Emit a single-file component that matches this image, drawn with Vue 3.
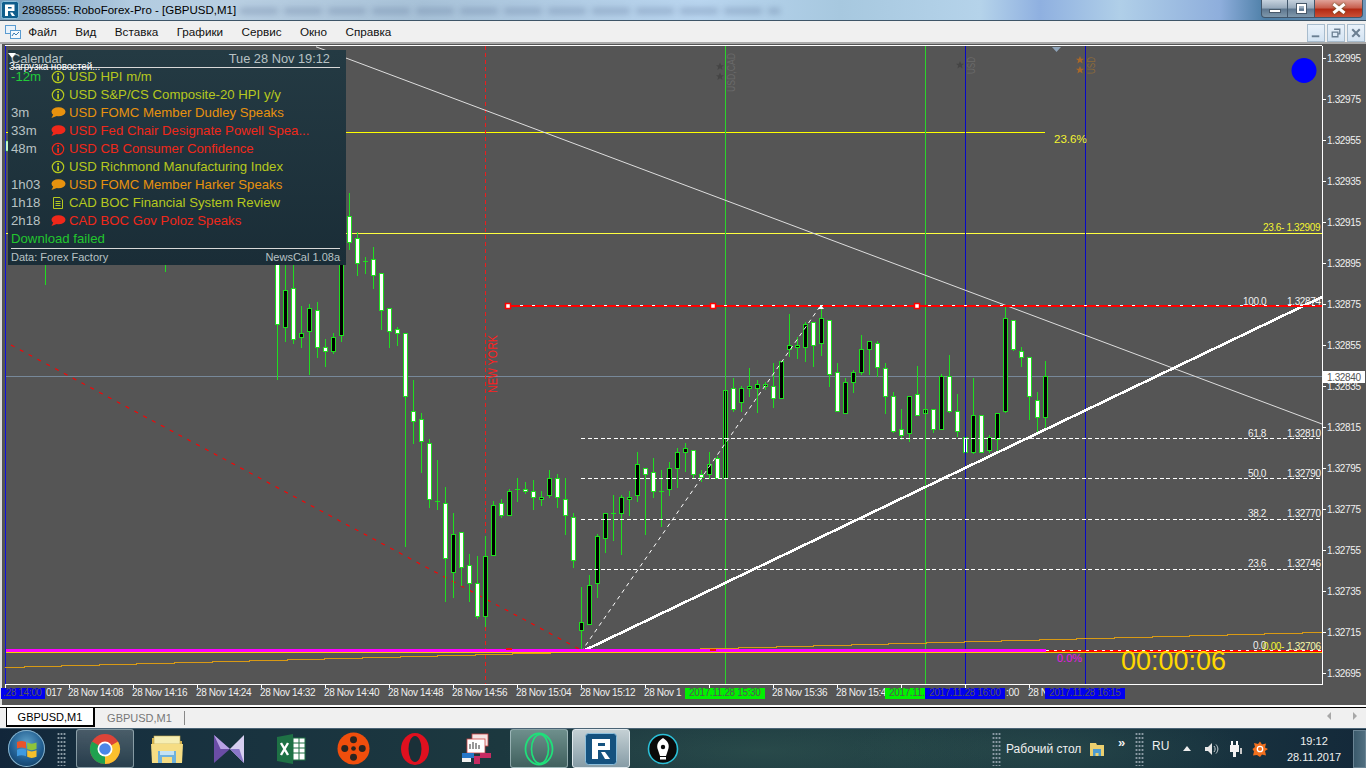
<script setup>
const raw = [
  ['w',250,324,230,380],['b',290,327,265,342],['w',288,339,265,344],['b',333,337,306,348],['b',308,331,304,375],
  ['w',310,347,302,358],['w',347,351,339,367],['b',337,351,333,354],['b',230,335,225,342],['w',216,242,193,250],
  ['w',238,263,232,276],['d',261,261,257,274],['w',259,275,247,289],['w',273,310,273,330],['w',308,331,308,348],
  ['w',329,333,327,346],['w',333,396,333,547],['w',411,421,380,444],['w',419,441,413,473],['w',443,499,439,508],
  ['d',501,501,460,510],['w',503,558,487,602],['b',534,572,513,598],['w',532,567,532,586],['w',565,583,554,602],
  ['w',583,616,556,619],['b',556,616,536,627],['b',505,555,501,555],['w',503,515,499,518],['b',491,515,489,515],
  ['d',489,489,478,502],['w',489,491,482,494],['w',491,497,480,510],['b',497,499,491,506],['b',478,495,470,498],
  ['w',478,497,474,508],['w',499,515,478,535],['w',517,560,513,568],['b',622,630,587,653],['b',585,624,575,624],
  ['b',536,583,534,598],['b',513,538,513,553],['d',513,513,495,541],['b',497,513,495,555],['b',497,499,491,516],
  ['b',464,495,452,502],['w',468,474,468,535],['w',472,491,458,498],['d',491,491,470,527],['b',468,489,462,496],
  ['b',452,468,448,488],['b',448,452,443,472],['w',450,474,450,479],['w',474,477,470,482],['b',464,474,452,479],
  ['w',458,478,456,479],['b',390,478,390,478],['w',388,409,378,412],['b',388,402,386,412],['b',386,388,368,397],
  ['b',384,388,380,413],['b',384,386,382,390],['w',386,398,363,408],['b',361,398,361,398],['b',345,349,314,357],
  ['b',345,347,337,359],['b',324,347,322,362],['w',322,345,322,367],['b',318,343,305,356],['w',320,374,320,387],
  ['w',372,411,363,411],['b',382,413,378,413],['b',372,382,370,393],['b',349,372,335,375],['b',341,349,341,375],
  ['w',343,367,341,377],['w',368,396,363,414],['w',396,431,392,433],['w',429,435,409,440],['b',396,433,396,442],
  ['w',394,415,366,415],['b',409,413,409,413],['w',409,429,409,433],['b',376,429,374,429],['w',376,411,355,413],
  ['w',411,431,394,437],['w',437,452,437,452],['b',415,452,378,454],['w',415,452,415,452],['b',437,450,435,453],
  ['b',413,439,413,451],['b',318,411,306,413],['w',320,349,320,351],['w',351,357,347,367],['w',357,396,357,420],
  ['w',400,417,392,433],['b',376,417,361,429]
]
const candles = raw.map((c, i) => ({
  x: 277 + i * 8, kind: c[0], top: c[1], bot: c[2], wt: c[3], wb: c[4]
}))

const orange = (() => {
  const pts = []
  let x = 5, y = 667
  pts.push(`${x},${y}`)
  x = 24
  while (x < 1322) {
    pts.push(`${x},${y}`)
    y -= 1
    pts.push(`${x},${y}`)
    x += 37.6
  }
  pts.push(`1322,${y}`)
  return pts.join(' ')
})()

const prices = ['1.32995','1.32975','1.32955','1.32935','1.32915','1.32895','1.32875','1.32855','1.32835','1.32815','1.32795','1.32775','1.32755','1.32735','1.32715','1.32695']
  .map((t, i) => ({ t, y: 58 + i * 41 }))

const ticks = [69,133,197,261,325,389,453,517,581,645,709,773,837,901,965,1029]

const timeLabels = [
  [46,'017'],[68,'28 Nov 14:08'],[132,'28 Nov 14:16'],[196,'28 Nov 14:24'],[260,'28 Nov 14:32'],[324,'28 Nov 14:40'],
  [388,'28 Nov 14:48'],[452,'28 Nov 14:56'],[516,'28 Nov 15:04'],[580,'28 Nov 15:12'],[644,'28 Nov 1'],
  [772,'28 Nov 15:36'],[836,'28 Nov 15:4'],[1006,':00'],[1028,'28 N']
]

const timeBoxes = [
  { x: 1, w: 44, fill: '#0000f0', tx: 3, t: '.28 14:00' },
  { x: 685, w: 80, fill: '#00f000', tx: 689, t: '2017.11.28 15:30' },
  { x: 885, w: 40, fill: '#00f000', tx: 889, t: '2017.11.' },
  { x: 925, w: 80, fill: '#0000f0', tx: 929, t: '2017.11.28 16:00' },
  { x: 1045, w: 80, fill: '#0000f0', tx: 1049, t: '2017.11.28 16:15' }
]

const fibs = [
  { y: 306, ty: 305, lv: '100.0', lx: 1243, p: '1.32874' },
  { y: 438, ty: 437, lv: '61.8', lx: 1248, p: '1.32810', dash: 1, x: 581 },
  { y: 478, ty: 477, lv: '50.0', lx: 1248, p: '1.32790', dash: 1, x: 581 },
  { y: 519, ty: 517, lv: '38.2', lx: 1248, p: '1.32770', dash: 1, x: 581 },
  { y: 569, ty: 567, lv: '23.6', lx: 1248, p: '1.32746', dash: 1, x: 581 }
]

const stars = [
  { x: 720, y: 66.5, c: '#454545' }, { x: 720, y: 76.5, c: '#454545' }, { x: 960, y: 65, c: '#454545' },
  { x: 1080, y: 60, c: '#a8682a' }, { x: 1080, y: 70, c: '#a8682a' }
]

const news = [
  { time: '-12m', icon: 'info', tone: 'yellow', text: 'USD HPI m/m', live: true },
  { time: '', icon: 'info', tone: 'yellow', text: 'USD S&P/CS Composite-20 HPI y/y' },
  { time: '3m', icon: 'talk', tone: 'orange', text: 'USD FOMC Member Dudley Speaks' },
  { time: '33m', icon: 'talk', tone: 'red', text: 'USD Fed Chair Designate Powell Spea...' },
  { time: '48m', icon: 'info', tone: 'red', text: 'USD CB Consumer Confidence' },
  { time: '', icon: 'info', tone: 'yellow', text: 'USD Richmond Manufacturing Index' },
  { time: '1h03', icon: 'talk', tone: 'orange', text: 'USD FOMC Member Harker Speaks' },
  { time: '1h18', icon: 'doc', tone: 'yellow', text: 'CAD BOC Financial System Review' },
  { time: '2h18', icon: 'talk', tone: 'red', text: 'CAD BOC Gov Poloz Speaks' }
]

const menus = ['Файл', 'Вид', 'Вставка', 'Графики', 'Сервис', 'Окно', 'Справка']
</script>

<template>
  <div class="screen">
    <header class="titlebar">
      <span class="blurbars"></span>
      <svg class="applogo" viewBox="0 0 18 18" width="18" height="18">
        <rect x="0.5" y="0.5" width="17" height="17" rx="2" fill="#0f5d8c" stroke="#8fc0da" />
        <path d="M4 3.5h9.5v6.5H7v5H4z M7 6v1.6h3.6V6z" fill="#fff" fill-rule="evenodd" />
        <path d="M9 11.5h2.5l2.5 3.5h-3z" fill="#fff" />
      </svg>
      <span class="wintitle">2898555: RoboForex-Pro - [GBPUSD,M1]</span>
      <div class="winbtns">
        <button class="wb"><span class="wmin"></span></button>
        <button class="wb"><span class="wres"></span></button>
        <button class="wb wclose">
          <svg viewBox="0 0 14 11" width="14" height="11"><path d="M1.5 1 L12.5 10 M12.5 1 L1.5 10" stroke="#fff" stroke-width="3" /></svg>
        </button>
      </div>
    </header>

    <nav class="menubar">
      <svg class="menuicon" viewBox="0 0 16 16" width="16" height="16">
        <rect x="0.5" y="1.5" width="10" height="8" fill="#e8f2fb" stroke="#5a9bd0" />
        <rect x="5.5" y="6.5" width="10" height="8" fill="#f4f9fe" stroke="#5a9bd0" />
        <path d="M7 12l2-3 2 2 3-3" fill="none" stroke="#3a7ab0" />
      </svg>
      <span v-for="m in menus" :key="m" class="menuitem">{{ m }}</span>
      <div class="mdibtns">
        <span class="mdi"><svg viewBox="0 0 17 17" width="16" height="16"><path d="M4 12h8" stroke="#6b7f92" stroke-width="2" /></svg></span>
        <span class="mdi"><svg viewBox="0 0 17 17" width="16" height="16"><path d="M6.5 4.5h6v5h-2 M4.5 7.5h6v5h-6z" fill="none" stroke="#6b7f92" stroke-width="1.4" /></svg></span>
        <span class="mdi"><svg viewBox="0 0 17 17" width="16" height="16"><path d="M4.5 4.5l8 8 M12.5 4.5l-8 8" stroke="#6b7f92" stroke-width="2.2" /></svg></span>
      </div>
    </nav>

    <main class="chartwrap">
      <svg class="chart" viewBox="0 44 1366 661" width="1366" height="661">
        <rect x="0" y="44" width="2" height="661" fill="#dcdcdc" />
        <line class="crisp" x1="5" y1="45.5" x2="1322" y2="45.5" stroke="#fff" />
        <line class="crisp" x1="5.5" y1="46" x2="5.5" y2="684" stroke="#1010e0" />

        <!-- horizontal objects -->
        <line class="crisp" x1="6" y1="132.5" x2="1045" y2="132.5" stroke="#ffff00" />
        <line class="crisp" x1="6" y1="233.5" x2="1322" y2="233.5" stroke="#ffff40" />
        <line class="crisp" x1="6" y1="376.5" x2="1322" y2="376.5" stroke="#778899" />
        <line x1="11" y1="345" x2="581" y2="650" stroke="#ff0000" stroke-width="1.1" stroke-dasharray="4 6" />
        <line class="crisp" x1="485.5" y1="46" x2="485.5" y2="684" stroke="#ee1c1c" stroke-dasharray="4 3" />
        <text class="ny" transform="translate(497 393) rotate(-90)" textLength="58" lengthAdjust="spacingAndGlyphs">NEW YORK</text>

        <!-- candles -->
        <rect x="6" y="141" width="2" height="10" fill="#fff" stroke="#1fdf1f" stroke-width="0.5" />
        <line class="crisp" x1="45.5" y1="265" x2="45.5" y2="285" stroke="#1fdf1f" />
        <line class="crisp" x1="165.5" y1="265" x2="165.5" y2="272" stroke="#1fdf1f" />
        <g v-for="c in candles" :key="c.x" class="crisp">
          <line :x1="c.x + 0.5" :y1="c.wt" :x2="c.x + 0.5" :y2="c.wb" stroke="#1fdf1f" />
          <line v-if="c.kind === 'd'" :x1="c.x - 2" :y1="c.top + 0.5" :x2="c.x + 3" :y2="c.top + 0.5" stroke="#1fdf1f" />
          <rect v-else :x="c.x - 1.5" :y="c.top + 0.5" width="4" :height="Math.max(c.bot - c.top, 1)"
            :fill="c.kind === 'w' ? '#fff' : '#000'" stroke="#1fdf1f" />
        </g>

        <!-- events -->
        <line class="crisp" x1="725.5" y1="46" x2="725.5" y2="684" stroke="#2ad42a" />
        <line class="crisp" x1="925.5" y1="46" x2="925.5" y2="684" stroke="#2ad42a" />
        <line class="crisp" x1="965.5" y1="46" x2="965.5" y2="684" stroke="#0808c8" />
        <line class="crisp" x1="1085.5" y1="46" x2="1085.5" y2="684" stroke="#0808c8" />
        <text class="ev" transform="translate(735 92) rotate(-90)" textLength="39" lengthAdjust="spacingAndGlyphs">USD,CAD</text>
        <text class="ev" transform="translate(975 74) rotate(-90)" textLength="17" lengthAdjust="spacingAndGlyphs">USD</text>
        <text class="ev evo" transform="translate(1095 74) rotate(-90)" textLength="17" lengthAdjust="spacingAndGlyphs">USD</text>
        <path v-for="s in stars" :key="s.x + '-' + s.y" :transform="`translate(${s.x} ${s.y})`" :fill="s.c"
          d="M0-4 L1.2-1.2 L4-1.2 L1.8.6 L2.6 3.6 L0 1.8 L-2.6 3.6 L-1.8.6 L-4-1.2 L-1.2-1.2Z" />
        <path d="M1052 47h9l-4.500 5z" fill="#8ea3b8" />

        <!-- trend lines -->
        <line x1="316" y1="46.800" x2="1322" y2="424" stroke="#dedede" />
        <line x1="581" y1="652" x2="821" y2="305" stroke="#fff" stroke-dasharray="4 4" />
        <line class="crisp" x1="581" y1="652" x2="1322" y2="297" stroke="#fff" stroke-width="2.600" />

        <!-- fibo -->
        <line class="crisp" x1="508" y1="306" x2="1322" y2="306" stroke="#ff0000" stroke-width="2" />
        <line class="crisp" x1="508" y1="305.500" x2="1322" y2="305.500" stroke="#fff" stroke-dasharray="3 9" />
        <g v-for="x in [508, 713, 917]" :key="x">
          <rect :x="x - 2.500" y="303.500" width="5" height="5" fill="#fff" stroke="#ff0000" stroke-width="1.500" />
        </g>
        <path d="M818 309l3-4 3 4z" fill="#fff" />
        <g v-for="f in fibs" :key="f.y">
          <line v-if="f.dash" class="crisp" :x1="f.x" :y1="f.y + 0.5" x2="1322" :y2="f.y + 0.5" stroke="#fff" stroke-dasharray="4 2.500" />
          <text class="tiny" :x="f.lx" :y="f.ty">{{ f.lv }}</text>
          <text class="tiny" x="1287" :y="f.ty">{{ f.p }}</text>
        </g>

        <!-- floor lines -->
        <polyline class="crisp" :points="orange" fill="none" stroke="#d99a14" />
        <line class="crisp" x1="6" y1="650.500" x2="1046" y2="650.500" stroke="#ff00ff" stroke-width="3" />
        <line class="crisp" x1="6" y1="652.500" x2="1322" y2="652.500" stroke="#f5d000" />
        <line class="crisp" x1="1046" y1="651" x2="1322" y2="651" stroke="#ff0000" stroke-width="2" />
        <line class="crisp" x1="1046" y1="650.500" x2="1322" y2="650.500" stroke="#fff" stroke-dasharray="3 5" />
        <rect x="506" y="648" width="6" height="2" fill="#ee1111" />
        <rect x="710" y="649" width="6" height="2" fill="#ee1111" />

        <text class="mid ylw" x="1054" y="143">23.6%</text>
        <text class="tiny ylw" x="1263" y="231">23.6- 1.32909</text>
        <text class="pct" x="1057" y="662">0.0%</text>
        <text class="clock" x="1121" y="670">00:00:06</text>
        <text class="tiny" x="1253" y="649">0.0</text>
        <text class="tiny ylw" x="1263" y="650">0.00-</text>
        <text class="tiny pale" x="1287" y="650">1.32706</text>

        <circle cx="1304" cy="70.500" r="12.500" fill="#0000ff" />

        <!-- price axis -->
        <line class="crisp" x1="1322.500" y1="46" x2="1322.500" y2="684.500" stroke="#fff" />
        <g v-for="p in prices" :key="p.t">
          <line class="crisp" x1="1323" :y1="p.y + 0.5" x2="1326" :y2="p.y + 0.5" stroke="#fff" />
          <text class="tiny" x="1327" :y="p.y + 4">{{ p.t }}</text>
        </g>
        <rect x="1323" y="371" width="42" height="12" fill="#fff" />
        <text class="tiny dark" x="1327" y="381">1.32840</text>

        <!-- time axis -->
        <line class="crisp" x1="5" y1="684.500" x2="1322" y2="684.500" stroke="#fff" />
        <line v-for="x in ticks" :key="x" class="crisp" :x1="x + 0.5" y1="685" :x2="x + 0.5" y2="688" stroke="#fff" />
        <line class="crisp" x1="5.500" y1="685" x2="5.500" y2="688" stroke="#fff" />
        <text v-for="l in timeLabels" :key="l[0]" class="tiny" :x="l[0]" y="696">{{ l[1] }}</text>
        <g v-for="b in timeBoxes" :key="b.x">
          <rect :x="b.x" y="688" :width="b.w" height="11" :fill="b.fill" />
          <text class="tiny boxed" :x="b.tx" y="696">{{ b.t }}</text>
        </g>
      </svg>

      <section class="calendar">
        <div class="calhead">
          <span class="calname">Calendar</span>
          <span>Tue 28 Nov 19:12</span>
        </div>
        <span class="loading">Загрузка новостей...</span>
        <span class="tri"></span>
        <div class="calrows">
          <div v-for="(n, i) in news" :key="i" class="calrow" :class="n.tone">
            <span class="caltime" :class="{ live: n.live }">{{ n.time }}</span>
            <svg class="calicon" viewBox="0 0 16 14" width="16" height="14">
              <g v-if="n.icon === 'info'">
                <circle cx="8" cy="7" r="5.700" fill="none" stroke="currentColor" stroke-width="1.200" />
                <rect x="7.200" y="3" width="1.800" height="1.800" fill="currentColor" />
                <rect x="7.200" y="5.800" width="1.800" height="5" fill="currentColor" />
              </g>
              <g v-else-if="n.icon === 'talk'">
                <ellipse cx="8.500" cy="5.800" rx="7" ry="4.500" fill="currentColor" />
                <path d="M3.500 8 L1.500 12 L8 9.500z" fill="currentColor" />
              </g>
              <g v-else>
                <path d="M3.500 1.500h6.500l2.500 2.500v8.500h-9z M5.500 5.500h5 M5.500 7.500h5 M5.500 9.500h5" fill="none" stroke="currentColor" />
              </g>
            </svg>
            <span class="caltext">{{ n.text }}</span>
          </div>
          <div class="calfail">Download failed</div>
        </div>
        <div class="calfoot">
          <span>Data: Forex Factory</span>
          <span>NewsCal 1.08a</span>
        </div>
      </section>
    </main>

    <div class="tabbar">
      <span class="tab active">GBPUSD,M1</span>
      <span class="tab">GBPUSD,M1</span>
      <span class="tabsep"></span>
      <span class="tabarrows">
        <svg viewBox="0 0 32 10" width="32" height="10"><path d="M5 1v8L1 5z M27 1v8l4-4z" fill="#a8a8a8" /></svg>
      </span>
    </div>

    <footer class="taskbar">
      <div class="startzone">
        <div class="orb">
          <svg viewBox="0 0 24 24" width="24" height="24">
            <path d="M2 5c3-1.500 6-1.500 9 0v6.500c-3-1.500-6-1.500-9 0z" fill="#e9542a" />
            <path d="M12.200 5.500c3 1.500 6 1.500 9.300 0v6.500c-3.300 1.500-6.300 1.500-9.300 0z" fill="#8fc43a" />
            <path d="M2 12.800c3-1.500 6-1.500 9 0v6.500c-3-1.500-6-1.500-9 0z" fill="#3f9ae0" />
            <path d="M12.200 13.300c3 1.500 6 1.500 9.300 0v6.500c-3.300 1.500-6.300 1.500-9.300 0z" fill="#f5c02c" />
          </svg>
        </div>
        <span class="grip"></span>
      </div>
      <div class="tasks">
        <div class="task lit">
          <svg viewBox="0 0 32 32" width="32" height="32">
            <circle cx="16" cy="16" r="15" fill="#dd4438" />
            <path d="M16 16 L29 8.500 A15 15 0 0 1 16 31 z" fill="#fbc02d" />
            <path d="M16 16 L16 31 A15 15 0 0 1 3 8.500 z" fill="#1fa14f" />
            <circle cx="16" cy="16" r="7.500" fill="#fff" />
            <circle cx="16" cy="16" r="5.800" fill="#4a86e8" />
          </svg>
        </div>
        <div class="task">
          <svg viewBox="0 0 34 32" width="34" height="32">
            <path d="M2 5h12l2 3h16v20H2z" fill="#d9b650" />
            <rect x="4" y="3" width="26" height="8" fill="#f6eeb4" stroke="#c7a84a" stroke-width="0.600" />
            <path d="M1 11h32l-1 19H2z" fill="#f6dd84" />
            <path d="M8 18h18v12h-4v-6H12v6H8z" fill="#6fb1dc" />
            <rect x="10" y="18" width="14" height="4" fill="#c4e2f4" />
          </svg>
        </div>
        <div class="task">
          <svg viewBox="0 0 34 32" width="34" height="30">
            <path d="M1 1 L18 16 L1 31z" fill="#6a4da6" />
            <path d="M1 1 L18 16 L8 16z" fill="#b8a2e4" />
            <path d="M33 1 L18 16 L33 31z" fill="#d7cef0" />
            <path d="M33 31 L18 16 L28 16z" fill="#8a76c8" />
          </svg>
        </div>
        <div class="task">
          <svg viewBox="0 0 30 32" width="30" height="32">
            <path d="M1 4 L17 1 V31 L1 28z" fill="#1e7145" />
            <rect x="17" y="5" width="12" height="22" fill="#fff" stroke="#1e7145" />
            <path d="M17 10h12M17 15h12M17 20h12M23 5v22" stroke="#1e7145" />
            <path d="M5 10l7 12M12 10L5 22" stroke="#fff" stroke-width="2.400" />
          </svg>
        </div>
        <div class="task">
          <svg viewBox="0 0 34 34" width="33" height="33">
            <circle cx="17" cy="17" r="16.500" fill="#f04e0c" />
            <circle cx="17" cy="8" r="3.600" fill="#2a2520" />
            <circle cx="17" cy="26" r="3.600" fill="#2a2520" />
            <circle cx="8" cy="17" r="3.600" fill="#2a2520" />
            <circle cx="26" cy="17" r="3.600" fill="#2a2520" />
            <circle cx="17" cy="17" r="2.400" fill="#2a2520" />
          </svg>
        </div>
        <div class="task">
          <svg viewBox="0 0 30 34" width="30" height="34">
            <ellipse cx="15" cy="17" rx="14" ry="16" fill="#e0101f" />
            <ellipse cx="15" cy="17" rx="6.500" ry="13" fill="#1a3038" />
          </svg>
        </div>
        <div class="task">
          <svg viewBox="0 0 32 32" width="32" height="32">
            <rect x="11" y="1" width="16" height="12" fill="#f4e4e4" stroke="#c44" stroke-width="0.800" />
            <rect x="6" y="6" width="18" height="14" fill="#fff" stroke="#c44" stroke-width="0.800" />
            <path d="M9 16v-5M12 16V9M15 16v-6M18 16v-4" stroke="#333" />
            <path d="M1 20h12v3h6v-3h11v5H19v6h-6v-6H1z" fill="#c72b62" />
            <path d="M1 20h12v5H1z" fill="#2577c7" />
            <path d="M1 25h9v4H1z" fill="#f1f1f1" />
          </svg>
        </div>
        <div class="task lit dim">
          <svg viewBox="0 0 30 34" width="30" height="34">
            <ellipse cx="15" cy="17" rx="13.500" ry="15.500" fill="none" stroke="#1fe07a" stroke-width="1.800" />
            <ellipse cx="16" cy="17" rx="8.500" ry="14.500" fill="none" stroke="#1fe07a" stroke-width="1.600" />
          </svg>
        </div>
        <div class="task lit bright">
          <svg viewBox="0 0 32 32" width="32" height="32">
            <rect x="0.500" y="0.500" width="31" height="31" rx="3" fill="#15527f" stroke="#8cbedb" />
            <path d="M7 6h18v11H13v9H7z M13 10v3h7v-3z" fill="#fff" fill-rule="evenodd" />
            <path d="M16 19h4l5 7h-5z" fill="#fff" />
          </svg>
        </div>
        <div class="task">
          <svg viewBox="0 0 32 32" width="32" height="32">
            <circle cx="16" cy="16" r="14.500" fill="#0a0a0a" stroke="#2bc0d8" stroke-width="1.600" />
            <path d="M16 5c5 3 7 7 5 12l-2 6h-6l-2-6C9 12 11 8 16 5z" fill="#fff" />
            <circle cx="16" cy="14" r="2.200" fill="#0a0a0a" />
            <rect x="13" y="24" width="6" height="2.500" fill="#fff" />
          </svg>
        </div>
      </div>
      <div class="tray">
        <span class="grip small"></span>
        <span class="desk">Рабочий стол</span>
        <svg class="trayfolder" viewBox="0 0 16 16" width="16" height="16">
          <path d="M1 2h6l1 2h7v11H1z" fill="#ecd06f" />
          <path d="M4 8h8v7H9.500v-3h-3v3H4z" fill="#4d9bd0" />
        </svg>
        <span class="chev">»</span>
        <span class="grip small second"></span>
        <span class="lang">RU</span>
        <span class="uptri"></span>
        <svg class="trayicon" viewBox="0 0 16 16" width="16" height="16">
          <path d="M1 6h3l4-4v12l-4-4H1z" fill="#e8e8e8" />
          <path d="M10 5c1.500 2 1.500 4 0 6 M12 3.500c2.500 3 2.500 6 0 9" fill="none" stroke="#c8d0d4" />
        </svg>
        <svg class="trayicon" viewBox="0 0 16 18" width="16" height="18">
          <path d="M4 1v5 M9 1v5" stroke="#fff" stroke-width="2" />
          <path d="M2 5h9v7H8v5H5v-5H2z" fill="#f2f2f2" />
          <path d="M12 8h2v6h-2z" fill="#c8c8c8" />
        </svg>
        <svg class="trayicon" viewBox="0 0 16 16" width="16" height="16">
          <path d="M8 .500l2 3 4-1-1 4 3 1.500-3 2 1 4.500-4-1-2 2.500-3-2-4 .500 1-4L.500 8l2.500-2L2 2l4 1z" fill="#f2701e" />
          <circle cx="8" cy="8" r="2.700" fill="none" stroke="#fff" stroke-width="1.300" />
        </svg>
        <div class="clockbox">
          <span>19:12</span>
          <span>28.11.2017</span>
        </div>
        <span class="showdesk"></span>
      </div>
    </footer>
  </div>
</template>

<style>
html, body { margin: 0; padding: 0; background: #f0f0f0; overflow: hidden; }
</style>

<style scoped>
.screen {
  width: 1366px; height: 768px; display: flex; flex-direction: column; overflow: hidden;
  font-family: "Liberation Sans", Arial, sans-serif;
}
.titlebar {
  position: relative; height: 21px; flex: none; display: flex; align-items: center; padding-left: 1px; box-sizing: border-box;
  background:
    linear-gradient(90deg, rgba(62,110,150,.45) 0, rgba(150,190,220,0) 130px),
    linear-gradient(90deg, #a9c7de 0, #b9cfe2 230px, #a8c2d8 420px, #b9d5ef 700px, #a7c8df 840px, #b5d3ea 980px, #8fb0e0 1040px, #b0cfe8 1120px, #8eaedc 1220px, #4c7ea6 1266px, #7199bd 1366px);
  border-bottom: 1px solid #3e5568;
}
.blurbars {
  position: absolute; left: 240px; top: 8px; width: 540px; height: 6px; filter: blur(3px); opacity: .3;
  background: repeating-linear-gradient(90deg, #4a5f86 0 38px, transparent 38px 44px);
}
.applogo { position: relative; margin-right: 3px; }
.wintitle { position: relative; font-size: 11.5px; color: #000; }
.winbtns { position: absolute; right: 3px; top: 0; display: flex; }
.wb {
  width: 27px; height: 18px; padding: 0; display: flex; align-items: center; justify-content: center;
  border: 1px solid #41566b; border-top: 0; border-left-width: 0;
  background: linear-gradient(180deg, #c6d2de 0, #99abbd 45%, #5f7890 55%, #7f98ac 100%);
}
.wb:first-child { border-left-width: 1px; border-radius: 0 0 0 4px; }
.wmin { width: 12px; height: 4px; margin-top: 4px; background: #fff; border: 1px solid #48596a; box-sizing: border-box; }
.wres { width: 9px; height: 9px; border: 2px solid #fff; outline: 1px solid #48596a; box-sizing: border-box; box-shadow: 2px -2px 0 -1px #fff; }
.wclose { width: 48px; background: linear-gradient(180deg, #e0a298 0, #c8604f 45%, #b32a14 55%, #cb5036 100%); border-radius: 0 0 4px 0; }
.wclose svg { filter: drop-shadow(0 0 1px #552); }

.menubar {
  position: relative; height: 21px; flex: none; display: flex; align-items: center; background: #f0f0f0; padding-left: 5px; box-sizing: border-box;
  font-size: 11.7px; color: #111;
}
.menuicon { margin-right: -2px; }
.menuitem { padding: 0 9.2px; }
.mdibtns { position: absolute; right: 1px; top: 3px; display: flex; gap: 2px; }
.mdi {
  width: 16px; height: 16px; display: block; border: 1px solid #a8bccd; background: linear-gradient(180deg, #eaf2fa, #d3e3f2);
}
.mdi svg { display: block; }

.chartwrap {
  position: relative; height: 663px; flex: none; background: #555; border-top: 2px solid #a8a8a8; box-sizing: border-box;
}
.chart { display: block; font-family: "Liberation Sans", Arial, sans-serif; }
.crisp { shape-rendering: crispEdges; }
.tiny { font-size: 10px; fill: #f0f0f0; letter-spacing: -0.35px; }
.mid { font-size: 11.5px; }
.ylw { fill: #f4f430; }
.pale { fill: #f8f8a8; }
.dark { fill: #555; }
.boxed { fill: #555; }
.ny { font-size: 12px; fill: #ff2020; }
.ev { font-size: 11px; fill: #6a6a6a; }
.evo { fill: #8a6a3a; }
.pct { font-size: 11px; fill: #e818e8; }
.clock { font-size: 27px; fill: #ffd700; }

.calendar {
  position: absolute; left: 8px; top: 6px; width: 338px; height: 215px; box-sizing: border-box;
  background: linear-gradient(180deg, #243a43 0, #1a2d37 100%);
  color: #b8c2c4; font-size: 13.2px;
}
.calhead {
  display: flex; justify-content: space-between; align-items: center; height: 17px; margin: 0 6px 0 3px; padding: 0 10px 0 0;
  border-bottom: 1px solid #d8d8d8; font-size: 12.8px;
}
.loading { position: absolute; left: 1px; top: 11px; font-size: 10px; color: #fff; line-height: 12px; letter-spacing: -.15px; }
.tri { position: absolute; left: 0; top: 3px; width: 0; height: 0; border: 4px solid transparent; border-top: 5px solid #fff; }
.calrows { display: flex; flex-direction: column; }
.calrow { display: grid; grid-template-columns: 40px 18px 1fr; align-items: center; height: 18px; line-height: 18px; padding-left: 3px; white-space: nowrap; }
.caltime { color: #b8c2c4; }
.caltime.live { color: #22cc3a; }
.calicon { display: block; margin-left: -1px; }
.yellow { color: #b6c81e; }
.orange { color: #e8920e; }
.red { color: #f0281a; }
.calfail { height: 18px; line-height: 18px; padding-left: 3px; color: #22c62e; }
.calfoot {
  display: flex; justify-content: space-between; align-items: center; height: 16px; margin: 0 6px 0 3px; border-top: 1px solid #d8d8d8; font-size: 11px;
}

.tabbar {
  position: relative; height: 23px; flex: none; box-sizing: border-box; background: #f0f0f0; border-top: 2px solid #fff;
  display: flex; align-items: flex-start; padding-left: 6px; font-size: 11px;
}
.tabbar::before { content: ""; position: absolute; left: 0; right: 0; top: 0; height: 1px; background: #000; }
.tab { width: 89px; height: 19px; box-sizing: border-box; margin-top: 1px; display: flex; align-items: center; justify-content: center; color: #777; }
.tab.active { position: relative; background: #fff; color: #000; border: 1px solid #000; border-width: 0 2px 2px 1px; }
.tabsep { width: 1px; height: 14px; margin: 4px 0 0 0; background: #888; }
.tabarrows { position: absolute; right: 8px; top: 4px; line-height: 0; }

.taskbar {
  position: relative; height: 40px; flex: none; display: flex; align-items: center; box-sizing: border-box;
  border-top: 1px solid #4a6375;
  background:
    radial-gradient(260px 40px at 760px 22px, rgba(60,100,90,.35), transparent),
    radial-gradient(200px 40px at 1050px 20px, rgba(60,100,90,.3), transparent),
    linear-gradient(90deg, #12263a 0, #17303f 120px, #1c383f 500px, #1f3d42 900px, #18333f 1200px, #14293a 1366px);
  color: #f0f0f0;
}
.startzone { width: 76px; flex: none; display: flex; align-items: center; height: 100%; padding-left: 8px; box-sizing: border-box; }
.orb {
  width: 37px; height: 37px; border-radius: 50%; display: flex; align-items: center; justify-content: center; flex: none;
  background: radial-gradient(circle at 50% 35%, #5da0c8 0, #1f5b8e 55%, #0e2f4c 100%);
  box-shadow: inset 0 0 0 1px #8ab4cc;
}
.grip {
  display: block; width: 9px; height: 34px; margin-left: 12px; flex: none;
  background: radial-gradient(circle, #8a9aa4 0 1px, transparent 1.2px) 0 0 / 3px 4px;
}
.grip.small { width: 9px; height: 34px; margin: 0; }
.grip.second { margin-left: 2px; }
.tasks { display: flex; gap: 4px; flex: none; }
.task { width: 58px; height: 39px; display: flex; align-items: center; justify-content: center; box-sizing: border-box; }
.task.lit {
  border: 1px solid rgba(200,220,225,.55); border-radius: 3px;
  background: linear-gradient(180deg, rgba(255,255,255,.22), rgba(255,255,255,.08));
}
.task.dim { background: linear-gradient(180deg, #6e8f8c, #40605e); }
.task.bright { background: linear-gradient(180deg, #c4d0d4, #869ca6); border-color: #dfe8ec; }
.tray { margin-left: auto; display: flex; align-items: center; height: 100%; font-size: 12px; }
.desk { margin-left: 5px; width: 83px; font-size: 12px; white-space: nowrap; }
.trayfolder { margin-right: 13px; }
.chev { width: 15px; margin-top: -12px; font-size: 13px; font-weight: bold; }
.lang { width: 31px; margin-left: 8px; margin-top: -6px; }
.uptri { width: 0; height: 0; border: 4px solid transparent; border-bottom: 5px solid #eee; border-top: 0; margin-right: 13px; }
.trayicon { margin-right: 8px; flex: none; }
.clockbox { width: 78px; display: flex; flex-direction: column; align-items: center; gap: 2px; font-size: 11px; line-height: 14px; margin-left: -1px; }
.showdesk { width: 13px; height: 38px; box-sizing: border-box; border: 1px solid #6a8494; background: linear-gradient(90deg, #3b5a6c, #516f80); }
</style>
